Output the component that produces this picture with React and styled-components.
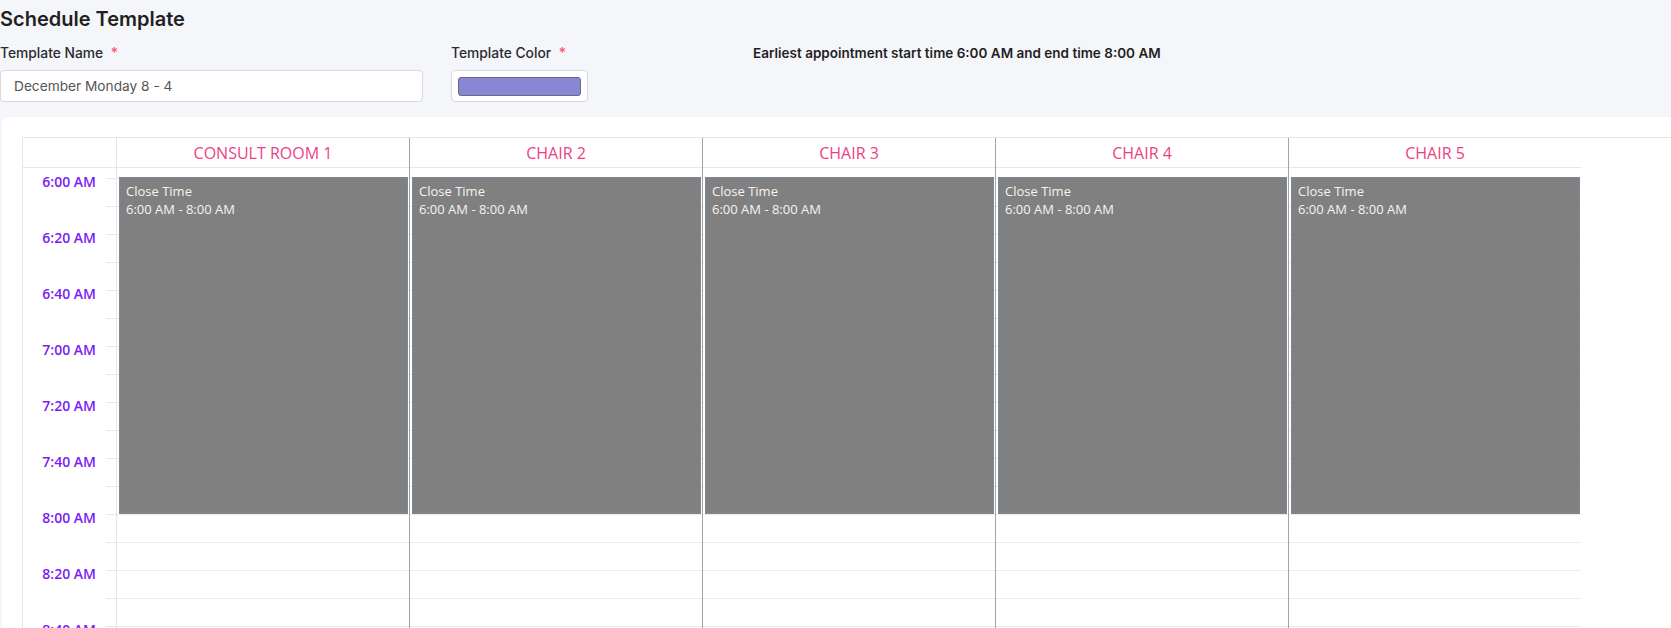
import React from 'react'
import styled, { createGlobalStyle } from 'styled-components'

const rooms = ['CONSULT ROOM 1', 'CHAIR 2', 'CHAIR 3', 'CHAIR 4', 'CHAIR 5']

const formatTime = (minutes) => {
    const h = Math.floor(minutes / 60)
    const m = minutes % 60
    return `${h}:${String(m).padStart(2, '0')} AM`
}

const slots = Array.from({ length: 18 }, (_, i) => 360 + i * 10)

const App = () => {
    return (
        <Page>
            <GlobalStyle />
            <Top>
                <Title>Schedule Template</Title>
                <FormRow>
                    <Field width="423px">
                        <Label>Template Name <Req>*</Req></Label>
                        <Input>December Monday 8 - 4</Input>
                    </Field>
                    <Field width="137px">
                        <Label>Template Color <Req>*</Req></Label>
                        <ColorBox>
                            <Swatch />
                        </ColorBox>
                    </Field>
                    <Info>Earliest appointment start time 6:00 AM and end time 8:00 AM</Info>
                </FormRow>
            </Top>

            <Card>
                <Grid>
                    <TimeCol>
                        <HeaderCell />
                        <Spacer />
                        {slots.map((m, i) => (
                            <TimeRow key={m}>
                                {i % 2 === 0 && <TimeLabel>{formatTime(m)}</TimeLabel>}
                                <Tick />
                            </TimeRow>
                        ))}
                    </TimeCol>

                    {rooms.map((room, idx) => (
                        <Column key={room} last={idx === rooms.length - 1}>
                            <HeaderCell>{room}</HeaderCell>
                            <Body>
                                <Spacer />
                                {slots.map((m) => (
                                    <Slot key={m} />
                                ))}
                                <Block>
                                    <div>Close Time</div>
                                    <div>6:00 AM - 8:00 AM</div>
                                </Block>
                            </Body>
                        </Column>
                    ))}
                </Grid>
            </Card>
        </Page>
    )
}

export default App

const GlobalStyle = createGlobalStyle`
    html, body {
        margin: 0;
        padding: 0;
        background: #f5f6fa;
        overflow: hidden;
    }
    * {
        box-sizing: border-box;
    }
`

const Page = styled.div`
    height: 628px;
    display: flex;
    flex-direction: column;
    font-family: Inter, "Noto Sans", sans-serif;
    color: #222;
`

const Top = styled.div`
    height: 117px;
    padding-top: 6px;
`

const Title = styled.div`
    font-size: 20px;
    font-weight: 600;
    line-height: 26px;
    color: #1f1f24;
`

const FormRow = styled.div`
    display: flex;
    align-items: flex-start;
    margin-top: 12px;
    gap: 28px;
`

const Field = styled.div`
    width: ${(p) => p.width};
    display: flex;
    flex-direction: column;
    gap: 8px;
`

const Label = styled.div`
    font-size: 13.8px;
    font-weight: 500;
    line-height: 18px;
    color: #2a2a30;
`

const Req = styled.span`
    color: #ff4f6e;
    margin-left: 4px;
`

const Input = styled.div`
    height: 32px;
    background: #fff;
    border: 1px solid #d6d9e1;
    border-radius: 4px;
    padding: 0 13px;
    display: flex;
    align-items: center;
    font-size: 13.7px;
    color: #555;
`

const ColorBox = styled.div`
    height: 32px;
    background: #fff;
    border: 1px solid #d6d9e1;
    border-radius: 4px;
    padding: 6px 6px 5px;
`

const Swatch = styled.div`
    height: 19px;
    background: #8787d4;
    border: 1px solid #6a6a7a;
    border-radius: 3px;
`

const Info = styled.div`
    margin-left: 137px;
    font-size: 13.5px;
    font-weight: 600;
    line-height: 18px;
    color: #1f1f24;
`

const Card = styled.div`
    flex: 1;
    margin-left: 2px;
    background: #fff;
    border-top-left-radius: 6px;
    padding: 20px 0 0 20px;
    overflow: hidden;
`

const Grid = styled.div`
    display: flex;
    align-items: flex-start;
    border-top: 1px solid #e6e6e6;
    border-left: 1px solid #e6e6e6;
    font-family: "Open Sans", "Noto Sans", sans-serif;
    min-height: 600px;
`

const TimeCol = styled.div`
    width: 94px;
    align-self: stretch;
    border-right: 1px solid #e6e6e6;
`

const HeaderCell = styled.div`
    height: 30px;
    border-bottom: 1px solid #e6e6e6;
    text-align: center;
    font-size: 16px;
    font-weight: 500;
    line-height: 30px;
    color: #ec3f83;
`

const Spacer = styled.div`
    height: 10px;
`

const TimeRow = styled.div`
    height: 28px;
    display: flex;
    justify-content: flex-end;
    align-items: flex-start;
`

const TimeLabel = styled.div`
    margin-top: -6px;
    margin-right: 10px;
    font-size: 14px;
    font-weight: 600;
    line-height: 20px;
    color: #7b1cf6;
`

const Tick = styled.div`
    width: 10px;
    height: 1px;
    background: #e6e6e6;
`

const Column = styled.div`
    width: 293px;
    flex-shrink: 0;
    align-self: stretch;
    border-right: 1px solid ${(p) => (p.last ? 'transparent' : '#a3a3a3')};
`

const Body = styled.div`
    position: relative;
`

const Slot = styled.div`
    height: 28px;
    border-top: 1px solid #ebebeb;
`

const Block = styled.div`
    position: absolute;
    top: 9px;
    left: 2px;
    right: 1px;
    height: 337px;
    background: #808080;
    border: 1px solid #7d8896;
    padding: 4px 6px;
    font-size: 13px;
    line-height: 18px;
    color: #f4f4f4;
`
